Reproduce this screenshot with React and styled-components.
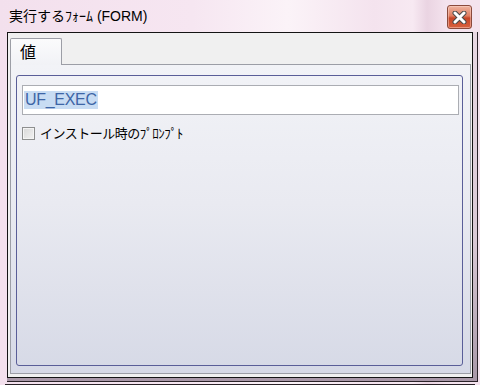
import styled, { createGlobalStyle } from "styled-components";

const GlobalStyle = createGlobalStyle`
  html, body {
    margin: 0;
    padding: 0;
    background: #f3e2ee;
  }
  * {
    box-sizing: border-box;
  }
`;

const Window = styled.div`
  position: relative;
  width: 480px;
  height: 385px;
  display: flex;
  flex-direction: column;
  background: linear-gradient(to right, #f3e0ed 0%, #f6e6f1 40%, #fbf3f8 60%, #f4e3ee 78%, #f7e9f2 86%, #ead4e2 89%, #f4e3ee 93%);
  font-family: "Liberation Sans", "Noto Sans CJK JP", sans-serif;
  overflow: hidden;
`;

const TitleBar = styled.div`
  height: 32px;
  flex: none;
  display: flex;
  align-items: center;
  justify-content: space-between;
  padding: 0 8px 2px 9px;
`;

const Title = styled.span`
  font-size: 14px;
  color: #000;
  white-space: nowrap;
`;

const Jp = styled.span`
  font-family: "Noto Sans CJK JP", sans-serif;
  font-size: ${(p) => p.$size || 14}px;
  letter-spacing: ${(p) => p.$spacing || 0}px;
`;

const CloseButton = styled.button`
  width: 25px;
  height: 24px;
  margin-top: 4px;
  padding: 0;
  border: 1px solid #8a4a3c;
  border-radius: 3px;
  background: linear-gradient(to bottom, #eeb3a0 0%, #e07d60 45%, #c74528 55%, #d8623f 100%);
  box-shadow: inset 0 0 0 1px rgba(255, 220, 210, 0.45);
  display: flex;
  align-items: center;
  justify-content: center;
`;

const FrameRow = styled.div`
  flex: none;
  display: flex;
  padding-left: 7px;
`;

const ClientFrame = styled.div`
  padding: 0 4px 3px 0;
  border-right: 1px solid #2a2228;
  border-bottom: 1px solid #2a2228;
  background: linear-gradient(to bottom, rgba(168, 150, 166, 0.15) 0%, rgba(168, 150, 166, 0.35) 60%, #a897a7 100%);
`;

const Client = styled.div`
  width: 466px;
  height: 346px;
  border: 1px solid #141414;
  background: #f0f0f0;
  padding: 5px 1px 3px 2px;
  display: flex;
  flex-direction: column;
`;

const TabRow = styled.div`
  display: flex;
  height: 26px;
  flex: none;
`;

const Tab = styled.div`
  width: 52px;
  height: 27px;
  border: 1px solid #9c9ea6;
  border-bottom: none;
  border-radius: 2px 2px 0 0;
  background: linear-gradient(to bottom, #fbfbfc, #f1f2f6);
  padding: 3px 0 0 9px;
  position: relative;
  z-index: 1;
`;

const TabLabel = styled.span`
  font-family: "Noto Sans CJK JP", sans-serif;
  font-size: 16px;
  line-height: 18px;
  color: #000;
`;

const Panel = styled.div`
  flex: 1;
  border: 1px solid #9c9ea6;
  background: linear-gradient(to bottom, #f2f3f7 0%, #e9eaf1 45%, #d6d9e6 100%);
  padding: 10px 7px 7px 5px;
  display: flex;
`;

const GroupBox = styled.div`
  flex: 1;
  border: 1px solid #5a5e98;
  border-radius: 3px;
  padding: 9px 3px 0 5px;
  display: flex;
  flex-direction: column;
`;

const TextBox = styled.div`
  height: 30px;
  border: 1px solid #abadb3;
  background: #fff;
  display: flex;
  align-items: center;
  padding-left: 1px;
`;

const Selected = styled.span`
  background: #c8dcf3;
  color: #3d65a6;
  font-family: "Liberation Sans", sans-serif;
  font-size: 16px;
  line-height: 18px;
  padding: 0 1px;
  letter-spacing: -0.3px;
`;

const CheckRow = styled.label`
  display: flex;
  align-items: center;
  gap: 5px;
  margin-top: 10px;
`;

const CheckBox = styled.span`
  width: 13px;
  height: 13px;
  border: 1px solid #8e8f8f;
  background: linear-gradient(135deg, #d8d8d8, #f2f2f2);
  box-shadow: inset 0 0 0 1px #f4f4f4;
  flex: none;
`;

const CheckLabel = styled.span`
  font-family: "Noto Sans CJK JP", sans-serif;
  font-size: 13px;
  letter-spacing: -0.5px;
  color: #000;
  line-height: 16px;
`;

const BottomEdge = styled.div`
  position: absolute;
  left: 5px;
  right: 5px;
  bottom: 0;
  height: 1px;
  background: #2a2228;
`;

function CloseIcon() {
  return (
    <svg width="15" height="13" viewBox="0 0 15 13">
      <path d="M3 2 L12 11 M12 2 L3 11" stroke="#4a4a4a" strokeWidth="5" strokeLinecap="round" />
      <path d="M3 2 L12 11 M12 2 L3 11" stroke="#ffffff" strokeWidth="3" strokeLinecap="round" />
    </svg>
  );
}

export default function App() {
  return (
    <>
      <GlobalStyle />
      <Window>
        <TitleBar>
          <Title>
            <Jp>実行するﾌｫｰﾑ</Jp> (FORM)
          </Title>
          <CloseButton aria-label="閉じる">
            <CloseIcon />
          </CloseButton>
        </TitleBar>
        <FrameRow>
          <ClientFrame>
            <Client>
              <TabRow>
                <Tab>
                  <TabLabel>値</TabLabel>
                </Tab>
              </TabRow>
              <Panel>
                <GroupBox>
                  <TextBox>
                    <Selected>UF_EXEC</Selected>
                  </TextBox>
                  <CheckRow>
                    <CheckBox />
                    <CheckLabel>インストール時のﾌﾟﾛﾝﾌﾟﾄ</CheckLabel>
                  </CheckRow>
                </GroupBox>
              </Panel>
            </Client>
          </ClientFrame>
        </FrameRow>
        <BottomEdge />
      </Window>
    </>
  );
}
